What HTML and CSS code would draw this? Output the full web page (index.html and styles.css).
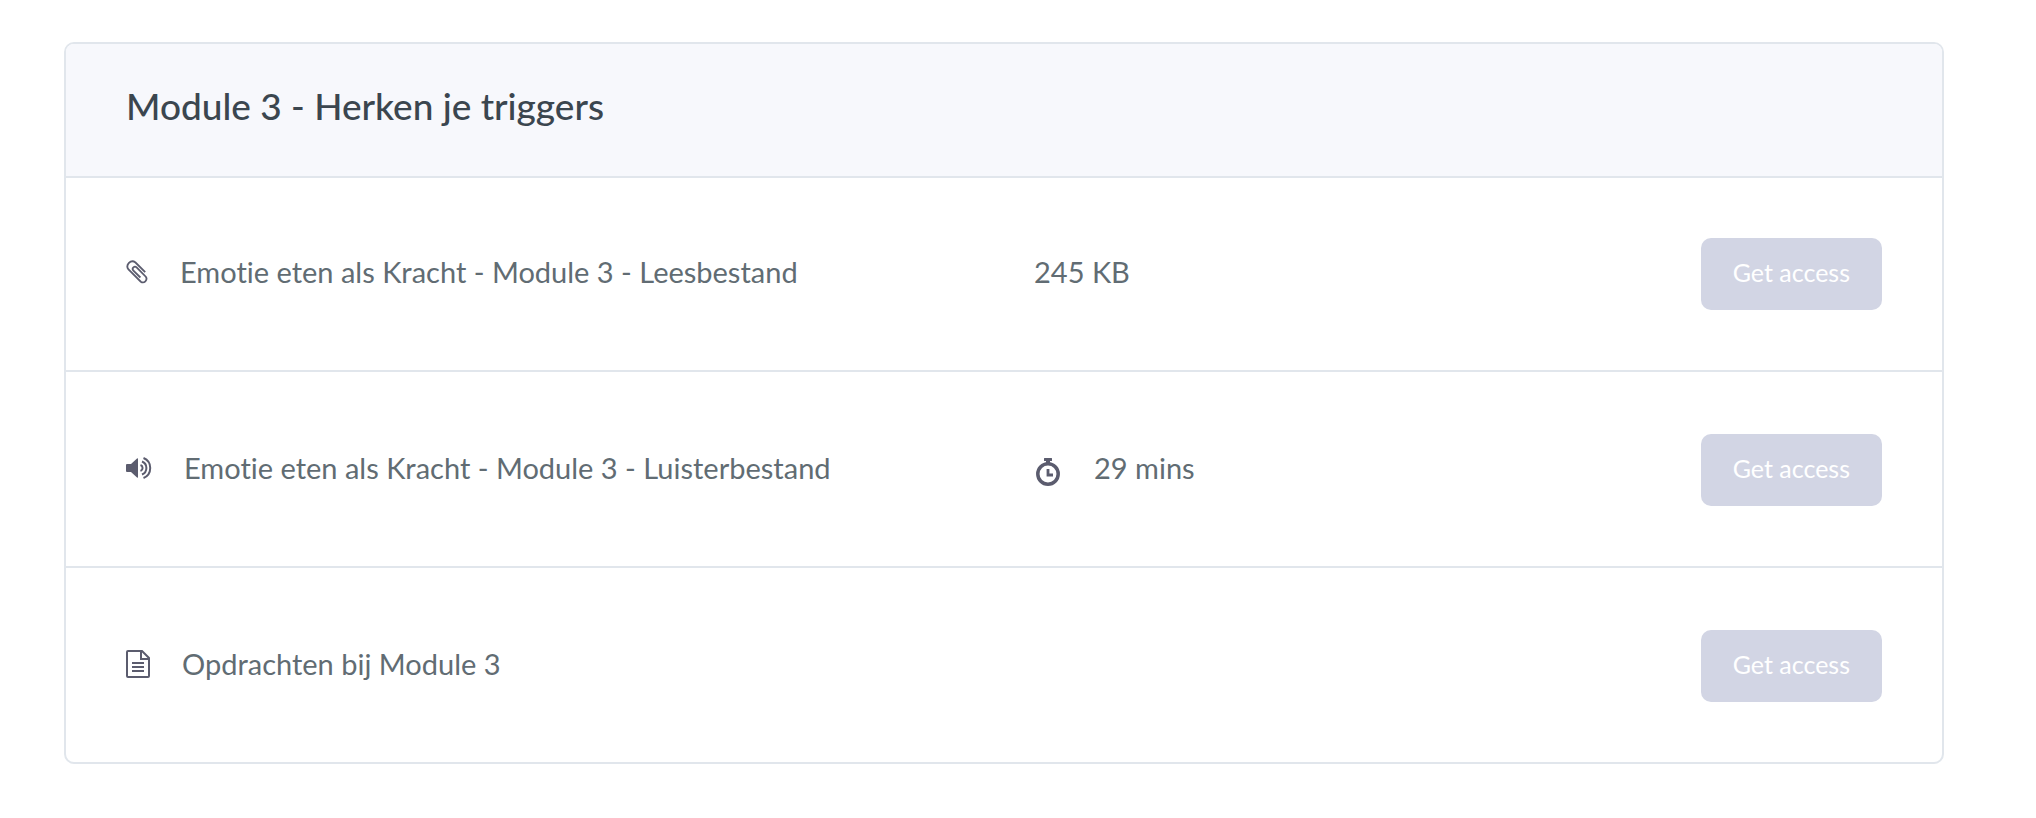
FILE: index.html
```
<!DOCTYPE html>
<html lang="nl">
<head>
    <meta charset="UTF-8">
    <meta name="viewport" content="width=device-width, initial-scale=1.0">
    <title>Module 3 - Herken je triggers</title>
    <link rel="stylesheet" href="styles.css">
</head>
<body>
    <section class="module">
        <header class="module-header">
            <h2>Module 3 - Herken je triggers</h2>
        </header>

        <ul class="lessons">
            <li class="lesson">
                <div class="lesson-title">
                    <svg class="icon" width="24" height="24" viewBox="0 0 24 24" aria-hidden="true">
                        <path d="M19.2 12.2L9.5 2.5A5 5 0 0 0 2.5 9.5L14.8 21.7A3.6 3.6 0 0 0 19.8 16.7L10.6 7.4A2.2 2.2 0 0 0 7.4 10.6L14.4 17.5" fill="none" stroke="currentColor" stroke-width="1.8"/>
                    </svg>
                    <span>Emotie eten als Kracht - Module 3 - Leesbestand</span>
                </div>
                <div class="lesson-info">
                    <span>245 KB</span>
                </div>
                <button type="button" class="access-btn">Get access</button>
            </li>

            <li class="lesson">
                <div class="lesson-title">
                    <svg class="icon" width="28" height="22" viewBox="0 0 28 22" aria-hidden="true">
                        <path d="M1 7H5L11 1.500Q12 .8 12 2V20Q12 21.200 11 20.500L5 15H1Q0 15 0 14V8Q0 7 1 7Z" fill="currentColor"/>
                        <path d="M14.500 8A3.200 3.200 0 0 1 14.500 14M16 4.500A7 7 0 0 1 16 17.500M17.500 1A10.800 10.800 0 0 1 17.500 21" fill="none" stroke="currentColor" stroke-width="2"/>
                    </svg>
                    <span>Emotie eten als Kracht - Module 3 - Luisterbestand</span>
                </div>
                <div class="lesson-info">
                    <svg class="icon icon-timer" width="28" height="28" viewBox="0 0 28 28" aria-hidden="true">
                        <path d="M10.500 0H17.500Q18 0 18 .5V2.500Q18 3 17.500 3H16V6H12V3H10.500Q10 3 10 2.500V.5Q10 0 10.500 0Z" fill="currentColor"/>
                        <circle cx="14" cy="16" r="10.200" fill="none" stroke="currentColor" stroke-width="3.500"/>
                        <path d="M14 11V17H19" fill="none" stroke="currentColor" stroke-width="2.800"/>
                    </svg>
                    <span>29 mins</span>
                </div>
                <button type="button" class="access-btn">Get access</button>
            </li>

            <li class="lesson">
                <div class="lesson-title">
                    <svg class="icon" width="26" height="28" viewBox="0 0 26 28" aria-hidden="true">
                        <path d="M2 1H16L23 8V26Q23 27 22 27H2Q1 27 1 26V2Q1 1 2 1ZM15 1V9H23M6 13H18M6 17H18M6 21H18" fill="none" stroke="currentColor" stroke-width="2"/>
                    </svg>
                    <span>Opdrachten bij Module 3</span>
                </div>
                <div class="lesson-info"></div>
                <button type="button" class="access-btn">Get access</button>
            </li>
        </ul>
    </section>
</body>
</html>
```
FILE: styles.css
```
* {
    box-sizing: border-box;
}
body {
    margin: 0;
    padding: 42px 92px 54px 64px;
    background-color: #ffffff;
    color: #616c73;
    font-family: Lato, "Open Sans", sans-serif;
    font-size: 29px;
    font-variant-ligatures: none;
    line-height: 40px;
}
.module {
    border: 2px solid #e1e6ec;
    border-radius: 10px;
    overflow: hidden;
}
.module-header {
    padding: 38px 60px 46px;
    background-color: #f7f8fc;
    border-bottom: 2px solid #e1e6ec;
}
.module-header h2 {
    margin: 0;
    color: #3b464f;
    font-size: 37px;
    font-weight: 500;
    line-height: 48px;
}
.lessons {
    list-style: none;
    margin: 0;
    padding: 0;
}
.lesson {
    display: flex;
    align-items: center;
    padding: 60px;
}
.lesson + .lesson {
    padding-top: 62px;
    border-top: 2px solid #e1e6ec;
}
.lesson-title {
    display: flex;
    align-items: center;
    gap: 30px;
    width: calc(50% + 30px);
    padding-bottom: 4px;
}
.lesson-info {
    display: flex;
    align-items: center;
    gap: 32px;
    flex: 1;
    padding-bottom: 4px;
}
.icon {
    flex: none;
    color: #5b5c6e;
}
.icon-timer {
    margin-top: 8px;
}
.access-btn {
    padding: 16px 32px 20px;
    background-color: #d2d5e4;
    border: none;
    border-radius: 10px;
    color: #ffffff;
    font-family: inherit;
    font-size: 25px;
    line-height: 36px;
    cursor: pointer;
}
```
